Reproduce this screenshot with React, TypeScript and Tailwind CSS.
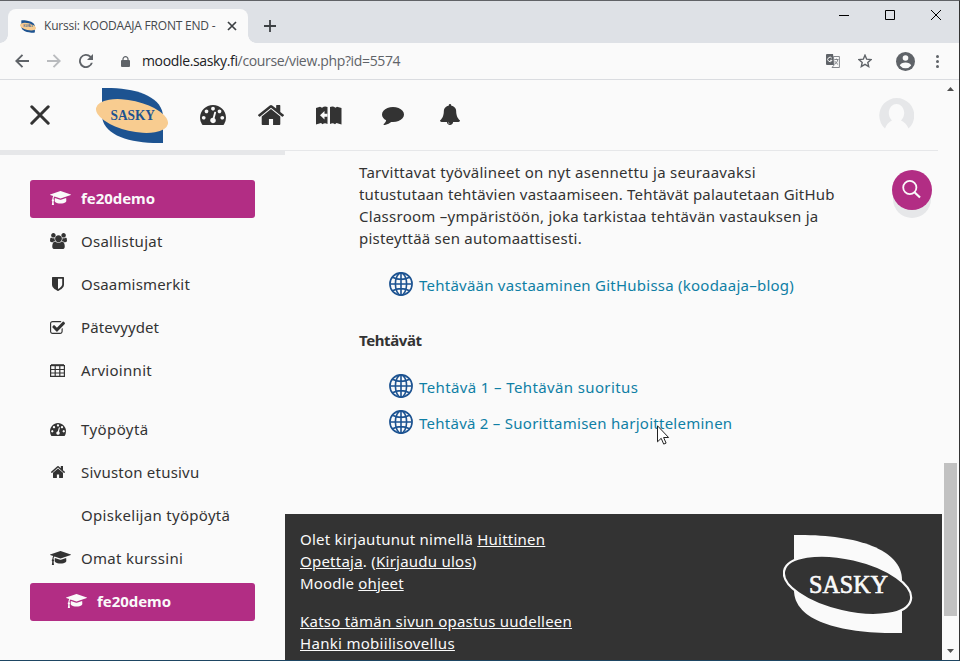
import type { ReactNode } from "react";

type GlyphProps = { d: string; box: [number, number, number, number]; className: string };

// Icon outlines use a y-up font grid; box is [minX, minY, maxX, maxY] on that grid.
function Glyph({ d, box, className }: GlyphProps) {
  const [x0, y0, x1, y1] = box;
  return (
    <svg className={className} viewBox={`${x0} ${-y1} ${x1 - x0} ${y1 - y0}`} preserveAspectRatio="none" fill="currentColor">
      <path transform="scale(1,-1)" d={d} />
    </svg>
  );
}

const dot = "q0 53 -37.5 90.5t-90.5 37.5t-90.5 -37.5t-37.5 -90.5t37.5 -90.5t90.5 -37.5t90.5 37.5t37.5 90.5z";
const GAUGE =
  `M384 384${dot}M576 832${dot}M1004 351l101 382q6 26 -7.5 48.5t-38.5 29.5t-48 -6.5t-30 -39.5l-101 -382q-60 -5 -107 -43.5t-63 -98.5q-20 -77 20 -146t117 -89t146 20t89 117q16 60 -6 117t-72 91zM1664 384${dot}M1024 1024${dot}M1472 832${dot}M1792 384q0 -261 -141 -483q-19 -29 -54 -29h-1402q-35 0 -54 29q-141 221 -141 483q0 182 71 348t191 286t286 191t348 71t348 -71t286 -191t191 -286t71 -348z`;
const HOME =
  "M1408 544v-480q0 -26 -19 -45t-45 -19h-384v384h-256v-384h-384q-26 0 -45 19t-19 45v480q0 1 .5 3t.5 3l575 474l575 -474q1 -2 1 -6zM1631 613l-62 -74q-8 -9 -21 -11h-3q-13 0 -21 7l-692 577l-692 -577q-12 -8 -24 -7q-13 2 -21 11l-62 74q-8 10 -7 23.5t11 21.5l719 599q32 26 76 26t76 -26l244 -204v195q0 14 9 23t23 9h192q14 0 23 -9t9 -23v-408l219 -182q10 -8 11 -21.5t-7 -23.5z";
const COMMENT =
  "M1792 640q0 -174 -120 -321.5t-326 -233t-450 -85.5q-70 0 -145 8q-198 -175 -460 -242q-49 -14 -114 -22h-5q-15 0 -27 10.5t-16 27.5v1q-3 4 -.5 12t2 10t4.5 9.5l6 9t7 8.5t8 9q7 8 31 34.5t34.5 38t31 39.5t32.5 51t27 59t26 76q-157 89 -247.5 220t-90.5 281q0 174 120 321.5t326 233t450 85.5t450 -85.5t326 -233t120 -321.5z";
const BELL =
  "M912 -160q0 16 -16 16q-59 0 -101.5 42.5t-42.5 101.5q0 16 -16 16t-16 -16q0 -73 51.5 -124.5t124.5 -51.5q16 0 16 16zM1728 128q0 -52 -38 -90t-90 -38h-448q0 -106 -75 -181t-181 -75t-181 75t-75 181h-448q-52 0 -90 38t-38 90q50 42 91 88t85 119.5t74.5 158.5t50 206t19.5 260q0 152 117 282.5t307 158.5q-8 19 -8 39q0 40 28 68t68 28t68 -28t28 -68q0 -20 -8 -39q190 -28 307 -158.5t117 -282.5q0 -139 19.5 -260t50 -206t74.5 -158.5t85 -119.5t91 -88z";
const CAP =
  "M1774 700l18 -316q4 -69 -82 -128t-235 -93.5t-323 -34.5t-323 34.5t-235 93.5t-82 128l18 316l574 -181q22 -7 48 -7t48 7zM2304 1024q0 -23 -22 -31l-1120 -352q-4 -1 -10 -1t-10 1l-652 206q-43 -34 -71 -111.5t-34 -178.5q63 -36 63 -109q0 -69 -58 -107l58 -433q2 -14 -8 -25q-9 -11 -24 -11h-192q-15 0 -24 11q-10 11 -8 25l58 433q-58 38 -58 107q0 73 65 111q11 207 98 330l-333 104q-22 8 -22 31t22 31l1120 352q4 1 10 1t10 -1l1120 -352q22 -8 22 -31z";
const SHIELD =
  "M1088 576v640h-448v-1137q119 63 213 137q235 184 235 360zM1280 1344v-768q0 -86 -33.5 -170.5t-83 -150t-118 -127.5t-126.5 -103t-121 -77.5t-89.5 -49.5t-42.5 -20q-12 -6 -26 -6t-26 6q-16 7 -42.5 20t-89.5 49.5t-121 77.5t-126.5 103t-118 127.5t-83 150t-33.5 170.5v768q0 26 19 45t45 19h1152q26 0 45 -19t19 -45z";
const CHECK =
  "M1408 606v-318q0 -119 -84.5 -203.5t-203.5 -84.5h-832q-119 0 -203.5 84.5t-84.5 203.5v832q0 119 84.5 203.5t203.5 84.5h832q63 0 117 -25q15 -7 18 -23q3 -17 -9 -29l-49 -49q-10 -10 -23 -10q-3 0 -9 2q-23 6 -45 6h-832q-66 0 -113 -47t-47 -113v-832q0 -66 47 -113t113 -47h832q66 0 113 47t47 113v254q0 13 9 22l64 64q10 10 23 10q6 0 12 -3q20 -8 20 -29zM1639 1095l-814 -814q-24 -24 -57 -24t-57 24l-430 430q-24 24 -24 57t24 57l110 110q24 24 57 24t57 -24l263 -263l647 647q24 24 57 24t57 -24l110 -110q24 -24 24 -57t-24 -57z";
const USERS =
  "M593 640q-162 -5 -265 -128h-134q-82 0 -138 40.5t-56 118.5q0 353 124 353q6 0 43.5 -21t97.5 -42.5t119 -21.5q67 0 133 23q-5 -37 -5 -66q0 -139 81 -256zM1664 3q0 -120 -73 -189.5t-194 -69.5h-874q-121 0 -194 69.5t-73 189.5q0 53 3.5 103.5t14 109t26.5 108.5t43 97.5t62 81t85.5 53.5t111.5 20q10 0 43 -21.5t73 -48t107 -48t135 -21.5t135 21.5t107 48t73 48t43 21.5q61 0 111.5 -20t85.5 -53.5t62 -81t43 -97.5t26.5 -108.5t14 -109t3.5 -103.5zM640 1280q0 -106 -75 -181t-181 -75t-181 75t-75 181t75 181t181 75t181 -75t75 -181zM1344 896q0 -159 -112.5 -271.5t-271.5 -112.5t-271.5 112.5t-112.5 271.5t112.5 271.5t271.5 112.5t271.5 -112.5t112.5 -271.5zM1920 671q0 -78 -56 -118.5t-138 -40.5h-134q-103 123 -265 128q81 117 81 256q0 29 -5 66q66 -23 133 -23q59 0 119 21.5t97.5 42.5t43.5 21q124 0 124 -353zM1792 1280q0 -106 -75 -181t-181 -75t-181 75t-75 181t75 181t181 75t181 -75t75 -181z";

function SaskyLogo({ className }: { className: string }) {
  return (
    <svg className={className} viewBox="0 0 72 55">
      <path d="M6 0C38-1 67 8 67 29V55C34 56 6 47 6 27Z" fill="#1d5391" />
      <ellipse cx="36" cy="28" rx="36.8" ry="15.2" transform="rotate(13 36 28)" fill="#f8cc90" />
      <text x="14.5" y="32" fontFamily="'Liberation Serif', serif" fontSize="14.5" fontWeight="bold" fill="#1d5391" textLength="44.5" lengthAdjust="spacingAndGlyphs">SASKY</text>
    </svg>
  );
}

function FooterLogo() {
  return (
    <svg className="w-[130px] h-[100px]" viewBox="0 0 130 100">
      <path d="M11 1C70 0 119 14 119 46V99C60 100 11 88 11 56Z" fill="#fafafa" />
      <ellipse cx="64.5" cy="51.3" rx="65" ry="26.5" transform="rotate(13 64.5 51.3)" fill="#333" stroke="#fafafa" strokeWidth="2.2" />
      <text x="26" y="59.3" fontFamily="'Liberation Serif', serif" fontSize="26" fill="#fafafa" stroke="#fafafa" strokeWidth=".7" textLength="79" lengthAdjust="spacingAndGlyphs">SASKY</text>
    </svg>
  );
}

function Globe() {
  return (
    <svg className="w-6 h-6 shrink-0" viewBox="0 0 24 24" fill="none" stroke="#1d5391" strokeWidth="1.6">
      <circle cx="12" cy="12" r="11.1" />
      <ellipse cx="12" cy="12" rx="5.6" ry="11.1" />
      <path d="M12 1v22M1 12h22M3.5 5.2Q12 9.5 20.5 5.2M3.5 18.8Q12 14.5 20.5 18.8" />
    </svg>
  );
}

function Item({ icon, active, nested, children }: { icon?: ReactNode; active?: boolean; nested?: boolean; children: ReactNode }) {
  return (
    <div className={`flex h-[38px] items-center rounded-[3px] ${nested ? "pl-9" : "pl-5"} ${active ? "bg-[#b22d84] text-[#fafafa] font-bold" : ""}`}>
      <span className="w-[31px] shrink-0">{icon}</span>
      <span className="pb-0.5">{children}</span>
    </div>
  );
}

const cap = <Glyph d={CAP} box={[0, -17, 2304, 1408]} className="-mt-0.5 w-[21px] h-[14px]" />;

function Sidebar() {
  return (
    <nav className="w-[285px] shrink-0 text-[15px]">
      <div className="h-[5px] bg-[#e6e7e9]" />
      <div className="flex flex-col gap-[5px] pl-[30px] pr-[30px] pt-[25px]">
        <Item active icon={cap}><span className="tracking-[-0.05px]">fe20demo</span></Item>
        <Item icon={<Glyph d={USERS} box={[0, -256, 1920, 1536]} className="-mt-0.5 w-[17px] h-4" />}><span className="tracking-[0.26px]">Osallistujat</span></Item>
        <Item icon={<Glyph d={SHIELD} box={[0, -128, 1280, 1408]} className="-mt-0.5 w-3 h-3.5 ml-0.5" />}><span className="tracking-[0.17px]">Osaamismerkit</span></Item>
        <Item icon={<Glyph d={CHECK} box={[0, 0, 1664, 1408]} className="-mt-0.5 w-[15px] h-[13px]" />}><span className="tracking-[0.1px]">Pätevyydet</span></Item>
        <Item
          icon={
            <svg className="-mt-0.5 w-[15px] h-[13px]" viewBox="0 0 15 13" fill="none" stroke="currentColor">
              <path d="M1 1.2h13" strokeWidth="2" />
              <path d="M.6 1v11.4h13.8V1M5.2 2v10M9.8 2v10M1 5.5h13M1 9h13" strokeWidth="1.2" />
            </svg>
          }
        ><span className="tracking-[0.3px]">Arvioinnit</span></Item>
        <div className="mt-4">
          <Item icon={<Glyph d={GAUGE} box={[0, -128, 1792, 1280]} className="-mt-0.5 w-4 h-[13px]" />}><span className="tracking-[0.42px]">Työpöytä</span></Item>
        </div>
        <Item icon={<Glyph d={HOME} box={[26, 0, 1638, 1283]} className="-mt-0.5 w-[14px] h-[12px] ml-px" />}><span className="tracking-[0.22px]">Sivuston etusivu</span></Item>
        <Item><span className="tracking-[0.3px]">Opiskelijan työpöytä</span></Item>
        <Item icon={cap}><span className="tracking-[0.3px]">Omat kurssini</span></Item>
        <Item active nested icon={cap}><span className="tracking-[-0.05px]">fe20demo</span></Item>
      </div>
    </nav>
  );
}

function Browser() {
  return (
    <div className="font-['Open_Sans',sans-serif]">
      <div className="flex h-[42px] bg-[#dee1e6] pl-2">
        <div className="relative mt-2 flex h-[34px] w-60 items-center rounded-t-lg bg-[#fafafa] pl-3 text-[12px] text-[#45484c]">
          <i className="absolute -left-2 bottom-0 size-2 bg-[radial-gradient(circle_at_0_0,#dee1e6_7.5px,#fafafa_8px)]" />
          <i className="absolute -right-2 bottom-0 size-2 bg-[radial-gradient(circle_at_100%_0,#dee1e6_7.5px,#fafafa_8px)]" />
          <SaskyLogo className="w-4 h-[13px]" />
          <span className="ml-2 w-[174px] overflow-hidden whitespace-nowrap tracking-[-0.21px]">Kurssi: KOODAAJA FRONT END -</span>
          <svg className="ml-[9px] size-2.5" viewBox="0 0 10 10" stroke="#3c4043" strokeWidth="1.7"><path d="M1 1l8 8M9 1l-8 8" /></svg>
        </div>
        <svg className="ml-4 mt-[19px] size-3" viewBox="0 0 12 12" stroke="#3c4043" strokeWidth="1.8"><path d="M6 0v12M0 6h12" /></svg>
        <div className="ml-auto mr-[18px] mt-[9px] flex gap-9">
          <svg className="size-2.5" viewBox="0 0 10 10" stroke="#000"><path d="M0 5.5h10" /></svg>
          <svg className="size-2.5" viewBox="0 0 10 10" stroke="#000" fill="none"><path d="M.5.5h9v9h-9z" /></svg>
          <svg className="size-2.5" viewBox="0 0 10 10" stroke="#000"><path d="M0 0l10 10M10 0L0 10" /></svg>
        </div>
      </div>
      <div className="flex h-[37px] items-center border-b border-[#dadce0] pl-[15px] text-[14px] text-[#5f6368]">
        <svg className="size-3.5" viewBox="0 0 14 14" fill="none" stroke="#5f6368" strokeWidth="1.9"><path d="M14 7H1.5M7.5 .8L1.3 7l6.2 6.2" /></svg>
        <svg className="ml-[18px] size-3.5" viewBox="0 0 14 14" fill="none" stroke="#b9bbbe" strokeWidth="1.9"><path d="M0 7h12.5M6.5 .8L12.7 7l-6.2 6.2" /></svg>
        <svg className="ml-[18px] size-3.5" viewBox="0 0 14 14" fill="#5f6368"><path d="M11.95 2.05A7 7 0 1 0 13.8 8.8h-1.9A5.2 5.2 0 1 1 10.7 3.3L8 6h6V0z" /></svg>
        <svg className="ml-7 h-[11px] w-[9px]" viewBox="0 0 9 11"><rect y="4" width="9" height="7" rx="1" fill="#5f6368" /><path d="M2 4.5V3a2.5 2.3 0 0 1 5 0v1.5" fill="none" stroke="#5f6368" strokeWidth="1.2" /></svg>
        <span className="ml-3 whitespace-nowrap pb-px tracking-[-0.35px]"><span className="text-[#202124]">moodle.sasky.fi</span>/course/view.php?id=5574</span>
        <svg className="ml-auto h-3.5 w-3.5" viewBox="0 0 14 14"><path d="M1 0h6l1.5 11H1a1 1 0 0 1-1-1V1a1 1 0 0 1 1-1z" fill="#5f6368" /><path d="M7.5 2.5h5.9v11H6l2-2.4z" fill="#fafafa" stroke="#777b80" strokeWidth=".9" /><path d="M5.8 4.2A2.2 2.2 0 1 0 6 6.3H4" fill="none" stroke="#fafafa" strokeWidth="1" /><path d="M8.3 5.5h4.2M10.4 4.6v1M11.8 5.6c-.3 2-1.5 3.6-3 4.6M9 7.2c.8 1.5 1.8 2.5 3 3.2" fill="none" stroke="#777b80" strokeWidth=".9" /></svg>
        <svg className="ml-[18px] size-3.5" viewBox="0 0 14 14" fill="none" stroke="#5f6368" strokeWidth="1.4"><path d="M7 1.2l1.7 4 4.3.4-3.200 2.800.9 4.200L7 10.400l-3.700 2.200.9-4.200L1 5.600l4.300-.4z" /></svg>
        <svg className="ml-6 size-[19px]" viewBox="0 0 19 19"><circle cx="9.5" cy="9.5" r="9.5" fill="#5f6368" /><circle cx="9.5" cy="6" r="2.8" fill="#fafafa" /><path d="M3.8 13.5c.5-2 3.2-3 5.7-3s5.2 1 5.7 3a7.2 7.2 0 0 1-11.4 0z" fill="#fafafa" /></svg>
        <svg className="ml-[21px] mr-5 h-[13px] w-[3px]" viewBox="0 0 3 13" fill="#5f6368"><circle cx="1.5" cy="1.5" r="1.5" /><circle cx="1.5" cy="6.5" r="1.5" /><circle cx="1.5" cy="11.5" r="1.5" /></svg>
      </div>
    </div>
  );
}

function Header() {
  return (
    <header className="flex h-[71px] w-[938px] items-center border-b border-[#e6e7e9] pl-[30px]">
      <svg className="size-5" viewBox="0 0 20 20" stroke="#333" strokeWidth="3" strokeLinecap="round"><path d="M1.8 1.8l16.4 16.4M18.2 1.8L1.8 18.2" /></svg>
      <SaskyLogo className="ml-[46px] h-[55px] w-[72px]" />
      <Glyph d={GAUGE} box={[0, -128, 1792, 1280]} className="mb-px ml-8 h-5 w-[26px]" />
      <Glyph d={HOME} box={[26, 0, 1638, 1283]} className="mb-px ml-8 h-5 w-[26px]" />
      <svg className="ml-8 mt-px h-[19px] w-[26px]" viewBox="0 0 26 19">
        <path d="M0 2l4-1.2 2 .9C8 .2 9.500 0 11.500 1V18c-2-1.200-3.500-1-5 .2L5 17 0 18.500zM14 1c2-1 3.500-.8 5.500.7L21 .8 25.500 2v16.500L20.500 17l-1.500 1.200c-1.500-1.200-3-1.400-5-.2z" fill="#333" />
        <path d="M4 9.200L8.500 5v2.700h3v3h-3v2.700z" fill="#fafafa" />
      </svg>
      <Glyph d={COMMENT} box={[0, -256, 1792, 1280]} className="ml-10 mt-px h-[18px] w-[22px]" />
      <Glyph d={BELL} box={[64, -256, 1728, 1536]} className="ml-9 mb-px h-[21px] w-5" />
      <svg className="ml-auto mr-6 h-[35px] w-[35px]" viewBox="0 0 35 35"><path d="M6 30.500A17.500 17.500 0 1 1 29.500 30.500C28 26.500 25 24 22 22.500 28 17 25 6 17.500 6S7 17 13 22.500C10 24 7.500 26.500 6 30.500z" fill="#e6e7e9" /></svg>
    </header>
  );
}

export default function App() {
  return (
    <div className="relative h-[661px] w-[960px] overflow-hidden border-b border-r border-t border-b-[#1e4663] border-r-[#333] border-t-[#606266] bg-[#fafafa] font-['Noto_Sans',sans-serif] text-[15px] text-[#333]">
      <Browser />
      <div className="flex h-[580px]">
        <div className="w-[942px] shrink-0">
          <Header />
          <div className="-mt-px flex h-[510px]">
            <Sidebar />
            <div className="flex w-[657px] flex-col">
              <main className="flex h-[364px] justify-between pl-[74px] pr-[10px] pt-[11px]">
                <div className="whitespace-nowrap leading-[22px]">
                  <p>
                    <span className="block tracking-[0.28px]">Tarvittavat työvälineet on nyt asennettu ja seuraavaksi</span>
                    <span className="block tracking-[0.185px]">tutustutaan tehtävien vastaamiseen. Tehtävät palautetaan GitHub</span>
                    <span className="block tracking-[0.27px]">Classroom –ympäristöön, joka tarkistaa tehtävän vastauksen ja</span>
                    <span className="block tracking-[0.23px]">pisteyttää sen automaattisesti.</span>
                  </p>
                  <div className="ml-[30px] mt-[23px] flex items-center gap-1.5 text-[#0f7fa5]"><Globe /><span className="mt-0.5 tracking-[0.24px]">Tehtävään vastaaminen GitHubissa (koodaaja–blog)</span></div>
                  <p className="mt-[33px] font-bold tracking-[-0.4px]">Tehtävät</p>
                  <div className="ml-[30px] mt-[23px] flex items-center gap-1.5 text-[#0f7fa5]"><Globe /><span className="mt-0.5 tracking-[0.38px]">Tehtävä 1 – Tehtävän suoritus</span></div>
                  <div className="ml-[30px] mt-3 flex items-center gap-1.5 text-[#0f7fa5]"><Globe /><span className="mt-0.5 tracking-[0.26px]">Tehtävä 2 – Suorittamisen harjoitteleminen</span></div>
                </div>
                <button className="mt-[9px] flex size-10 items-center justify-center rounded-full bg-[#b22d84] pb-0.5 pr-0.5 shadow-[0_9px_0_-1px_#e6e7e9]">
                  <svg className="size-[19px]" viewBox="0 0 19 19" fill="none" stroke="#fafafa" strokeWidth="1.8"><circle cx="7.800" cy="7.500" r="6.600" /><path d="M12.500 12.200l5.500 5.300" strokeWidth="2.200" /></svg>
                </button>
              </main>
              <footer className="flex h-[146px] justify-between whitespace-nowrap bg-[#333] pl-[15px] pr-[29px] leading-[22px] text-[#fafafa]">
                <div className="pt-3.5 tracking-[0.24px]">
                  <p>Olet kirjautunut nimellä <u>Huittinen</u></p>
                  <p><u>Opettaja</u>. (<u>Kirjaudu ulos</u>)</p>
                  <p className="tracking-[0.15px]">Moodle <u>ohjeet</u></p>
                  <p className="mt-4"><u>Katso tämän sivun opastus uudelleen</u></p>
                  <p className="tracking-[0.3px]"><u>Hanki mobiilisovellus</u></p>
                </div>
                <div className="pt-5"><FooterLogo /></div>
              </footer>
            </div>
          </div>
        </div>
        <div className="flex w-[17px] flex-col items-center">
          <svg className="mt-[7px] h-1 w-[7px]" viewBox="0 0 7 4"><path d="M3.500 0L7 4H0z" fill="#505050" /></svg>
          <div className="mt-[372px] h-[153px] w-[13px] bg-[#c1c1c1]" />
          <svg className="mt-[33px] h-1 w-[7px]" viewBox="0 0 7 4"><path d="M0 0h7L3.500 4z" fill="#505050" /></svg>
        </div>
      </div>
      <svg className="absolute left-[657px] top-[424px] h-[20px] w-[13px]" viewBox="0 0 13 20"><path d="M.5.8v16l3.700-3.500 2.500 5.800 2.400-1-2.500-5.600h5z" fill="#fff" stroke="#222" /></svg>
    </div>
  );
}
